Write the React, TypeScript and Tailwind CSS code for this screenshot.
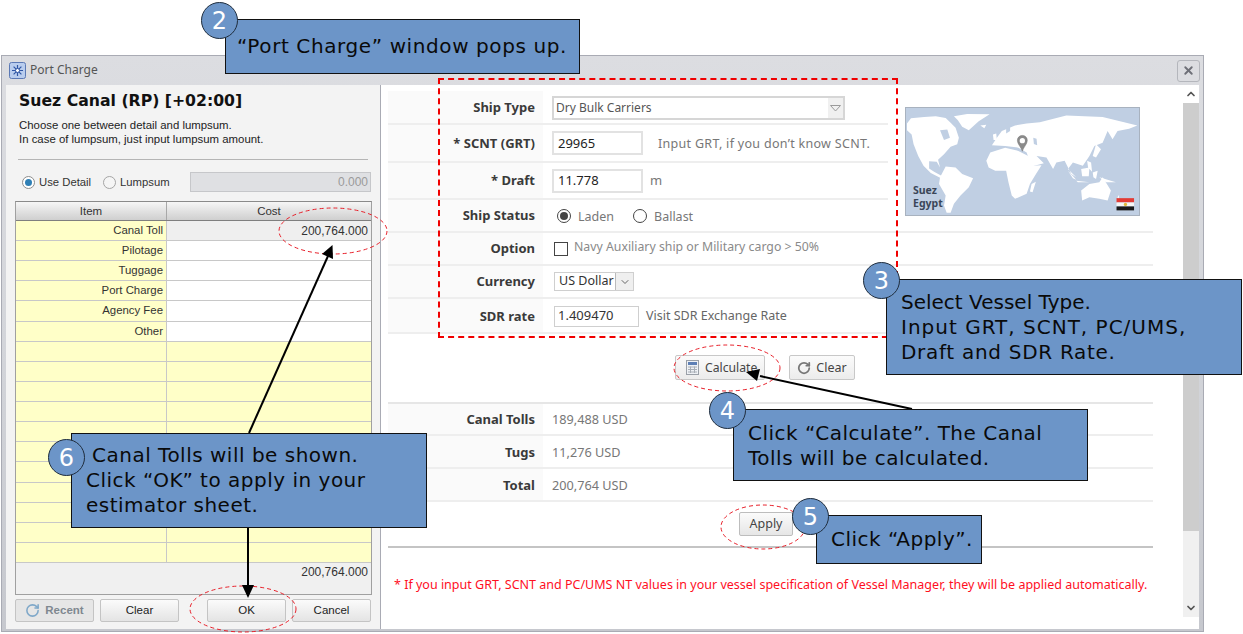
import React from "react";
import { ChevronUp, ChevronDown, RotateCw, X } from "lucide-react";

const ui = "font-['Noto_Sans','Liberation_Sans',sans-serif]";

function Row({ label, h, children, labelCls, valueCls }: { label: string; h: string; children?: React.ReactNode; labelCls?: string; valueCls?: string }) {
  return (
    <div className={`flex border-b-2 border-[#eeeeee] ${h}`}>
      <div className={`w-[155px] shrink-0 bg-[#fafafa] flex items-center justify-end pr-[8px] font-bold text-[13px] text-[#3a3a3a] ${labelCls ?? ""}`}>
        {label}
      </div>
      <div className={`flex items-center flex-1 ${valueCls ?? ""}`}>{children}</div>
    </div>
  );
}

function Callout({ cls, badge, badgeCls, children }: { cls: string; badge: string; badgeCls: string; children: React.ReactNode }) {
  return (
    <>
      <div className={`absolute bg-[#6c95c8] border border-[#111] text-[#0a0a0a] font-['DejaVu_Sans',sans-serif] text-[20px] leading-[25px] tracking-[0.5px] whitespace-nowrap ${cls}`}>
        {children}
      </div>
      <div className={`absolute w-[37px] h-[37px] rounded-full bg-[#6c95c8] border border-[#1f2d3d] text-white flex items-center justify-center font-['DejaVu_Sans',sans-serif] text-[24px] ${badgeCls}`}>
        {badge}
      </div>
    </>
  );
}

function Btn({ w, children, muted }: { w: string; children: React.ReactNode; muted?: boolean }) {
  return (
    <div className={`${w} h-[23px] flex items-center justify-center rounded-[2px] border border-[#c4c4c4] text-[11.500px] ${muted ? "bg-[#e6e6e6] text-[#7f8890] font-bold" : "bg-gradient-to-b from-[#fbfbfb] to-[#e4e4e4] text-[#222]"}`}>
      {children}
    </div>
  );
}

function WorldMap() {
  return (
    <svg viewBox="15 15 705 324" preserveAspectRatio="none" className="w-[233px] h-[107px] block">
      <rect x="15" y="15" width="705" height="324" fill="#c0cfe3" />
      <g fill="#ffffff">
        <path d="M18 62 L30 46 L70 42 L105 40 L135 45 L150 60 L165 75 L175 105 L170 125 L150 132 L130 155 L112 172 L118 195 L108 178 L85 176 L85 198 L100 208 L125 222 L118 226 L90 212 L68 190 L52 160 L38 125 L32 95 L18 82 Z" />
        <path d="M160 40 L200 33 L268 34 L235 55 L205 82 L185 72 L172 52 Z" />
        <path d="M118 225 L135 192 L165 195 L185 215 L218 228 L205 255 L180 280 L160 305 L150 332 L138 332 L130 310 L135 280 L115 245 Z" />
        <path d="M258 175 L270 150 L315 135 L355 145 L385 160 L400 190 L425 188 L405 220 L390 245 L380 275 L345 290 L335 280 L325 240 L318 205 L285 205 L265 195 Z" />
        <path d="M305 85 L345 68 L380 62 L420 58 L500 38 L610 42 L715 68 L690 78 L655 85 L640 110 L625 85 L610 120 L585 130 L570 160 L550 190 L520 180 L505 200 L530 225 L515 215 L495 175 L470 180 L460 200 L440 165 L410 160 L432 182 L395 192 L380 150 L355 135 L315 130 L275 128 L290 105 Z" />
        <path d="M545 265 L570 245 L600 240 L610 225 L635 265 L625 295 L600 290 L570 285 L548 295 Z" />
        <path d="M505 205 L530 232 L520 228 Z M545 200 L570 195 L568 222 L548 222 Z M530 235 L570 240 L535 240 Z M600 225 L650 240 L620 240 Z M563 175 L575 180 L578 208 L566 195 Z M580 210 L595 205 L590 230 L582 225 Z M590 125 L605 140 L590 165 L580 160 Z M395 245 L408 238 L398 270 L390 268 Z M278 95 L288 92 L290 112 L280 112 Z M240 68 L258 66 L252 76 Z M655 285 L660 278 L658 295 Z" />
      </g>
      <g fill="#c0cfe3">
        <path d="M118 82 L140 80 L148 105 L130 112 Z" />
        <path d="M355 108 L375 105 L378 114 L358 116 Z M400 105 L410 108 L412 128 L402 124 Z M318 68 L330 62 L330 85 L318 92 Z" />
      </g>
      <path d="M367 98 a15 15 0 0 1 15 15 c0 11 -11 20 -15 33 c-4 -13 -15 -22 -15 -33 a15 15 0 0 1 15 -15 Z" fill="#8b8b8b" stroke="#707070" strokeWidth="1.500" />
      <circle cx="367" cy="114" r="8" fill="#ffffff" />
      <rect x="652" y="288" width="53" height="13" fill="#e23b35" />
      <rect x="652" y="301" width="53" height="12" fill="#f6f6f6" />
      <rect x="652" y="313" width="53" height="12" fill="#1a1a1a" />
      <circle cx="679" cy="307" r="5" fill="#e0b83a" />
    </svg>
  );
}

const items = ["Canal Toll", "Pilotage", "Tuggage", "Port Charge", "Agency Fee", "Other", "", "", "", "", "", "", "", "", "", "", ""];

export default function App() {
  return (
    <div className={`relative w-[1243px] h-[634px] bg-white overflow-hidden pl-[1px] pt-[55px] ${ui}`}>
      <div className="w-[1203px] h-[577px] border border-[#a9abb4] bg-gradient-to-b from-[#dcdde1] via-[#d3d5da] to-[#c6c8ce] flex flex-col">
        <div className="h-[29px] shrink-0 flex items-center pl-[7px] pr-[3px]">
          <svg viewBox="0 0 17 17" className="w-[17px] h-[17px]">
            <rect x="0.500" y="0.500" width="16" height="16" rx="2" fill="#b9cdee" stroke="#5b79b5" />
            <path d="M8.500 3 V14 M3 8.500 H14 M4.600 4.600 L12.400 12.400 M12.400 4.600 L4.600 12.400" stroke="#2f56a5" strokeWidth="1.200" />
            <circle cx="8.500" cy="8.500" r="2" fill="#ffffff" stroke="#2f56a5" />
          </svg>
          <span className="ml-[4px] -mt-[2px] text-[12px] text-[#555]">Port Charge</span>
          <div className="ml-auto w-[23px] h-[22px] rounded-[3px] border border-[#b4b6bc] bg-[#dcdde1] flex items-center justify-center">
            <X size={13} strokeWidth={3.5} className="text-[#6e7078]" />
          </div>
        </div>

        <div className="flex-1 flex mx-[4px] mb-[2px] min-h-0">
          {/* Left panel */}
          <div className="w-[375px] shrink-0 bg-[#f3f3f3] border-r border-[#a9abb4] px-[9px] flex flex-col font-['Liberation_Sans',sans-serif]">
            <div className="pl-[4px] pt-[5px] h-[30px] text-[15.700px] leading-[22px] font-bold text-[#111] font-['DejaVu_Sans',sans-serif] whitespace-nowrap">
              Suez Canal (RP) [+02:00]
            </div>
            <div className="pl-[4px] pt-[3px] text-[11.400px] leading-[14px] text-[#222] whitespace-nowrap">
              <div>Choose one between detail and lumpsum.</div>
              <div>In case of lumpsum, just input lumpsum amount.</div>
            </div>
            <div className="mt-[13px] mx-[3px] border-t border-[#b5b5b5]" />
            <div className="mt-[12px] flex items-center h-[20px]">
              <span className="ml-[7px] w-[13px] h-[13px] rounded-full border border-[#8d8d8d] bg-white flex items-center justify-center">
                <span className="w-[7px] h-[7px] rounded-full bg-[#2f7fb5]" />
              </span>
              <span className="ml-[4px] w-[52px] text-[11.300px] text-[#333] whitespace-nowrap">Use Detail</span>
              <span className="ml-[12px] w-[13px] h-[13px] rounded-full border border-[#a5a5a5] bg-[#f5f5f5]" />
              <span className="ml-[4px] text-[11.300px] text-[#333]">Lumpsum</span>
              <div className="ml-auto w-[181px] h-[20px] bg-[#dfe0e3] border border-[#c6c7ca] flex items-center justify-end pr-[2px] text-[12px] text-[#9a9a9a]">0.000</div>
            </div>
            <div className="mt-[9px] w-[357px] border border-[#a0a0a0] border-t-[#8a8a8a]">
              <div className="h-[19px] grid grid-cols-[151px_1fr] bg-gradient-to-b from-[#f6f6f6] to-[#cfcfcf] border-b border-[#7f7f7f] text-[11.500px] text-[#333] leading-[18px] text-center">
                <div className="border-r border-[#a8a8a8]">Item</div>
                <div>Cost</div>
              </div>
              <div className="h-[342px] grid grid-cols-[151px_1fr] auto-rows-fr">
                {items.map((it, i) => (
                  <React.Fragment key={i}>
                    <div className="bg-[#ffffc8] border-r border-b border-[#c8c8c8] flex items-center justify-end pr-[3px] text-[11.400px] text-[#333]">{it}</div>
                    <div className={`border-b border-[#c8c8c8] flex items-center justify-end pr-[3px] text-[12px] text-[#333] ${i === 0 ? "bg-[#efefef]" : i < 6 ? "bg-white" : "bg-[#ffffc8]"}`}>
                      {i === 0 ? "200,764.000" : ""}
                    </div>
                  </React.Fragment>
                ))}
              </div>
              <div className="h-[31px] bg-[#f0f0f0] text-right pr-[3px] pt-[1px] text-[12px] leading-[16px] text-[#333]">200,764.000</div>
            </div>
            <div className="mt-[4px] flex w-[357px]">
              <Btn w="w-[79px]" muted>
                <RotateCw size={15} strokeWidth={2.500} className="text-[#7fa8c9] mr-[5px]" />
                Recent
              </Btn>
              <div className="ml-[6px]"><Btn w="w-[79px]">Clear</Btn></div>
              <div className="ml-[28px]"><Btn w="w-[79px]">OK</Btn></div>
              <div className="ml-[6px]"><Btn w="w-[79px]">Cancel</Btn></div>
            </div>
          </div>

          {/* Right panel */}
          <div className="flex-1 bg-white flex min-w-0">
            <div className="flex-1 pl-[7px] pt-[6px] min-w-0">
              <div className="flex">
                <div className="w-[500px] shrink-0">
                  <Row label="Ship Type" h="h-[34px]" labelCls="pt-[2px]">
                    <div className="ml-[9px] mt-[2px] w-[293px] h-[24px] border-2 border-[#d6d6d6] flex items-center pl-[2px] text-[12px] text-[#555]">
                      Dry Bulk Carriers
                      <span className="ml-auto w-[15px] h-full bg-[#f0f0f0] flex items-center justify-center">
                        <svg viewBox="0 0 11 7" className="w-[11px] h-[7px]"><path d="M0.500 0.500 H10.500 L5.500 6 Z" fill="none" stroke="#9a9a9a" /></svg>
                      </span>
                    </div>
                  </Row>
                  <Row label="* SCNT (GRT)" h="h-[38px]" labelCls="pt-[2px]">
                    <div className="ml-[9px] w-[91px] h-[24px] border-2 border-[#e2e2e2] flex items-center pl-[4px] pt-[1px] text-[13px] text-[#222]">29965</div>
                    <span className="ml-[15px] mt-[2px] text-[12.500px] tracking-[0.3px] text-[#777] whitespace-nowrap">Input GRT, if you don’t know SCNT.</span>
                  </Row>
                  <Row label="* Draft" h="h-[37px]" labelCls="pt-[1px]">
                    <div className="ml-[9px] w-[91px] h-[24px] border-2 border-[#e2e2e2] flex items-center pl-[4px] pt-[1px] text-[13px] text-[#222]">11.778</div>
                    <span className="ml-[7px] text-[13px] text-[#777]">m</span>
                  </Row>
                </div>
                <div className="ml-[17px] mt-[16px] -mb-[30px] border border-[#a8b2bf] self-start overflow-hidden relative">
                  <WorldMap />
                  <div className="absolute left-[7px] top-[76px] text-[10.500px] leading-[13px] font-bold text-[#3a4658]">Suez<br />Egypt</div>
                </div>
              </div>
              <div className="w-[765px]">
                <Row label="Ship Status" h="h-[33px]">
                  <span className="ml-[14px] w-[14px] h-[14px] rounded-full border border-[#444] flex items-center justify-center">
                    <span className="w-[8px] h-[8px] rounded-full bg-[#444]" />
                  </span>
                  <span className="ml-[7px] mt-[3px] text-[12.500px] text-[#777]">Laden</span>
                  <span className="ml-[19px] w-[14px] h-[14px] rounded-full border border-[#444]" />
                  <span className="ml-[7px] mt-[3px] text-[12.500px] text-[#777]">Ballast</span>
                </Row>
                <Row label="Option" h="h-[33px]" labelCls="pt-[1px]">
                  <span className="ml-[11px] w-[14px] h-[14px] border border-[#444]" />
                  <span className="ml-[6px] -mt-[3px] text-[12.300px] text-[#8a8a8a]">Navy Auxiliary ship or Military cargo &gt; 50%</span>
                </Row>
                <Row label="Currency" h="h-[33px]" labelCls="pt-[1px]">
                  <div className="ml-[11px] w-[80px] h-[19px] border border-[#cfcfcf] flex items-center pl-[4px] text-[12.500px] text-[#333] whitespace-nowrap">
                    US Dollar
                    <span className="ml-auto w-[18px] h-full bg-[#efefef] border-l border-[#bbb] flex items-center justify-center">
                      <ChevronDown size={12} className="text-[#666]" />
                    </span>
                  </div>
                </Row>
                <Row label="SDR rate" h="h-[35px]" labelCls="pt-[2px]" valueCls="pt-[1px]">
                  <div className="ml-[11px] w-[85px] h-[21px] border border-[#cfcfcf] flex items-center pl-[3px] text-[13px] text-[#333]">1.409470</div>
                  <span className="ml-[7px] text-[12.500px] text-[#666]">Visit SDR Exchange Rate</span>
                </Row>
              </div>
              <div className="w-[765px] mt-[21px] h-[25px] flex pl-[287px]">
                <div className="w-[90px] h-[25px] flex items-center rounded-[2px] border border-[#c8c8c8] bg-gradient-to-b from-[#fbfbfb] to-[#ececec] text-[12.200px] text-[#444]">
                  <svg viewBox="0 0 13 15" className="ml-[10px] w-[13px] h-[15px]">
                    <rect x="0.500" y="0.500" width="12" height="14" fill="#eef1f5" stroke="#9aa0a8" />
                    <rect x="2" y="2" width="9" height="3" fill="#5d7fb5" />
                    <path d="M2 7 H11 M2 9.500 H11 M2 12 H11 M4.500 6.500 V13 M8.500 6.500 V13" stroke="#a8aeb6" />
                  </svg>
                  <span className="ml-[6px] mt-[2px]">Calculate</span>
                </div>
                <div className="ml-[24px] w-[66px] h-[25px] flex items-center justify-center rounded-[2px] border border-[#c8c8c8] bg-gradient-to-b from-[#fbfbfb] to-[#ececec] text-[12.500px] text-[#444]">
                  <RotateCw size={14} strokeWidth={3} className="text-[#777] mr-[5px]" />
                  <span className="mt-[2px]">Clear</span>
                </div>
              </div>
              <div className="w-[765px] mt-[22px] border-t-2 border-[#e6e6e6]">
                <Row label="Canal Tolls" h="h-[32px]" labelCls="pt-[2px]" valueCls="pt-[2px]"><span className="ml-[9px] text-[12.700px] text-[#777]">189,488 USD</span></Row>
                <Row label="Tugs" h="h-[33px]" labelCls="pt-[2px]" valueCls="pt-[2px]"><span className="ml-[9px] text-[12.700px] text-[#777]">11,276 USD</span></Row>
                <Row label="Total" h="h-[33px]" labelCls="pt-[2px]" valueCls="pt-[2px]"><span className="ml-[9px] text-[12.700px] text-[#777]">200,764 USD</span></Row>
              </div>
              <div className="w-[765px] mt-[10px] pl-[351px]">
                <div className="w-[54px] h-[24px] flex items-center justify-center rounded-[2px] border border-[#bdbdbd] bg-gradient-to-b from-[#fbfbfb] to-[#e6e6e6] text-[12.500px] text-[#444] pt-[1px]">Apply</div>
              </div>
              <div className="w-[765px] mt-[10px] border-t-2 border-[#c4c4c4]" />
              <div className="mt-[29px] pl-[6px] text-[12.530px] leading-[16px] text-[#ff0f1f] whitespace-nowrap">
                * If you input GRT, SCNT and PC/UMS NT values in your vessel specification of Vessel Manager, they will be applied automatically.
              </div>
            </div>
            <div className="w-[16px] shrink-0 h-[532px] bg-[#f0f0f0] flex flex-col">
              <div className="h-[18px] bg-white flex items-center justify-center"><ChevronUp size={12} strokeWidth={3.500} className="text-[#555]" /></div>
              <div className="h-[428px] bg-[#cdcdcd]" />
              <div className="mt-auto h-[18px] flex items-center justify-center"><ChevronDown size={12} strokeWidth={3.500} className="text-[#555]" /></div>
            </div>
          </div>
        </div>
      </div>

      {/* Dashed highlights and arrows lying over the window */}
      <div className="absolute left-[438px] top-[78px] w-[460px] h-[260px] border-2 border-dashed border-[#f00000]" />
      <svg className="absolute left-0 top-0 w-[1243px] h-[634px] pointer-events-none" viewBox="0 0 1243 634">
        <g fill="none" stroke="#e8202a" strokeWidth="1" strokeDasharray="4 3">
          <ellipse cx="333" cy="231" rx="54" ry="23" />
          <ellipse cx="727" cy="368" rx="53" ry="23" />
          <ellipse cx="763" cy="527" rx="42" ry="22" />
          <ellipse cx="243" cy="609" rx="53" ry="23" />
        </g>
        <g stroke="#000" strokeWidth="2">
          <line x1="249" y1="433" x2="328" y2="256" />
          <line x1="248" y1="527" x2="248" y2="590" />
          <line x1="912" y1="409" x2="760" y2="376" />
        </g>
        <g fill="#000">
          <polygon points="332.500,245 333,259 322,254" />
          <polygon points="248,598 242,585 254,585" />
          <polygon points="746,372 760,369 757,381" />
        </g>
      </svg>

      <Callout cls="left-[225px] top-[19px] w-[355px] h-[55px] pl-[11px] pt-[14px] tracking-[0.6px]" badge="2" badgeCls="left-[201px] top-[2px]">
        “Port Charge” window pops up.
      </Callout>
      <Callout cls="left-[886px] top-[279px] w-[356px] h-[96px] pl-[14px] pt-[10px]" badge="3" badgeCls="left-[863px] top-[262px]">
        <span className="tracking-[0px]">Select Vessel Type.</span><br />
        <span className="tracking-[1px]">Input GRT, SCNT, PC/UMS,</span><br />
        <span className="tracking-[0.7px]">Draft and SDR Rate.</span>
      </Callout>
      <Callout cls="left-[733px] top-[409px] w-[355px] h-[72px] pl-[14px] pt-[11px]" badge="4" badgeCls="left-[709px] top-[392px]">
        Click “Calculate”. The Canal<br />Tolls will be calculated.
      </Callout>
      <Callout cls="left-[816px] top-[515px] w-[166px] h-[49px] pl-[14px] pt-[11px]" badge="5" badgeCls="left-[792px] top-[498px]">
        Click “Apply”.
      </Callout>
      <Callout cls="left-[71px] top-[433px] w-[356px] h-[95px] pl-[14px] pt-[9px]" badge="6" badgeCls="left-[48px] top-[439px]">
        <span className="ml-[6px]">Canal Tolls will be shown.</span><br />Click “OK” to apply in your<br />estimator sheet.
      </Callout>
    </div>
  );
}
